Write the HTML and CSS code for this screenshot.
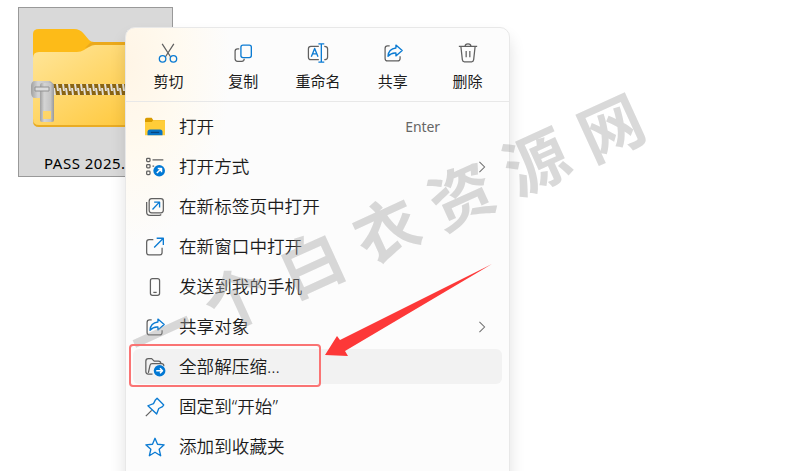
FILE: index.html
```
<!DOCTYPE html>
<html lang="zh-CN">
<head>
    <meta charset="UTF-8">
    <meta name="viewport" content="width=device-width, initial-scale=1.0">
    <title>全部解压缩</title>
    <link rel="stylesheet" href="styles.css">
</head>
<body>
    <div class="desktop">
        <div class="file">
            <svg class="zip-folder" width="136" height="112" viewBox="0 0 136 112">
                <defs>
                    <linearGradient id="front" x1="0" y1="0" x2="1" y2="1">
                        <stop offset="0" stop-color="#ffe69b"/>
                        <stop offset="0.8" stop-color="#ffcb45"/>
                        <stop offset="1" stop-color="#ffc937"/>
                    </linearGradient>
                    <linearGradient id="metal" x1="0" y1="0" x2="1" y2="0">
                        <stop offset="0" stop-color="#a0a0a0"/>
                        <stop offset="0.3" stop-color="#d4d4d4"/>
                        <stop offset="0.75" stop-color="#c4c4c4"/>
                        <stop offset="1" stop-color="#989898"/>
                    </linearGradient>
                    <pattern id="teeth" width="6" height="11" patternUnits="userSpaceOnUse" x="23" y="64">
                        <rect width="6" height="11" fill="#8a6412"/>
                        <path d="M0 4h2l1 7H1zM3 0h2l1 7H4z" fill="#e4e0d6"/>
                    </pattern>
                </defs>
                <path d="M3 45V14q0-5 6-5h35q6 0 10 5l5 6q2 2 5 2h66v40H3z" fill="#fdbb18"/>
                <path d="M55 28l5-5q2-1 4-1h66v5H60z" fill="#eba91c"/>
                <path d="M3 38q0-6 6-6h38q4 0 7-2l5-3q3-2 6-2h67v81H9q-6 0-6-6z" fill="url(#front)"/>
                <path d="M3 99q0 6 6 6h123v2H9q-6 0-6-6z" fill="#e9ac24"/>
                <rect x="22" y="64" width="110" height="11" fill="url(#teeth)"/>
                <path d="M4 61h16q4 2 4 7v5q-2 5-6 5H4q-3-1-3-6v-6q0-4 3-5z" fill="url(#metal)"/>
                <path fill-rule="evenodd" d="M12 63h9q3 0 3 3v34q0 2-2 2H12q-2 0-2-2V66q0-3 2-3zM13 91v8h8v-8z" fill="url(#metal)"/>
                <path d="M5 67h14v4H5z" fill="#dcdcdc" stroke="#929292" stroke-width="1"/>
            </svg>
            <div class="file-name">PASS 2025.</div>
        </div>

        <div class="menu">
            <div class="actions">
                <div class="action">
                    <svg class="icon" viewBox="0 0 24 24"><path d="M5 1l10 15.500M19 1L9 16.500"/><g class="blue"><circle cx="5.500" cy="19" r="3.900"/><circle cx="18.500" cy="19" r="3.900"/></g></svg>
                    <span>剪切</span>
                </div>
                <div class="action">
                    <svg class="icon" viewBox="0 0 24 24"><path d="M7.500 7H5.500q-3 0-3 3v9q0 3 3 3h5q3 0 3-3"/><rect class="blue" x="9.500" y="2.500" width="12.500" height="15" rx="2.500"/></svg>
                    <span>复制</span>
                </div>
                <div class="action">
                    <svg class="icon" viewBox="0 0 24 24"><path d="M13 20H3.500q-3 0-3-3V7q0-3 3-3H13M19.500 4q4 0 4 3v10q0 3-4 3"/><path class="blue" d="M4 16.500l4-10 4 10M5.400 13h5.200M12.500 1h7M16 1v22M12.500 23h7"/></svg>
                    <span>重命名</span>
                </div>
                <div class="action">
                    <svg class="icon" viewBox="0 0 24 24"><use href="#share"/></svg>
                    <span>共享</span>
                </div>
                <div class="action">
                    <svg class="icon" viewBox="0 0 24 24"><path d="M1 4h22M8.500 4q0-3 3.500-3t3.500 3M3.500 4.500l1.700 15.500q.3 2.500 2.500 2.500h8.600q2.200 0 2.500-2.500l1.700-15.500M9.800 9.500v7.500M14.200 9.500v7.500"/></svg>
                    <span>删除</span>
                </div>
            </div>

            <div class="items">
                <div class="item">
                    <svg class="icon" viewBox="0 0 24 24"><g stroke="none"><path d="M0 3q0-2 2-2h6l2 3h14v7H0z" fill="#d99b00"/><path d="M0 6h8l2-2h14v18H0z" fill="#ffcd39"/><path d="M3 22v-4q0-3 3-3h12q3 0 3 3v4z" fill="#0873c4"/></g><path d="M7 18.500h10" stroke="#07457e"/></svg>
                    <span class="label">打开</span>
                    <span class="shortcut">Enter</span>
                </div>
                <div class="item">
                    <svg class="icon" viewBox="0 0 24 24"><rect x="2" y="1.500" width="4" height="4" rx="1"/><rect x="2" y="9" width="4" height="4" rx="1"/><rect x="2" y="17" width="4" height="4" rx="1"/><path d="M9 3.500h13M9 11h2"/><circle class="disc" cx="17" cy="16.500" r="7"/><path class="white" d="M14.200 19.300l5.300-5.300M15.300 13.700h4.500v4.500"/></svg>
                    <span class="label">打开方式</span>
                    <svg class="chevron" viewBox="0 0 8 14"><path d="M1 1l6 6-6 6"/></svg>
                </div>
                <div class="item">
                    <svg class="icon" viewBox="0 0 24 24"><rect x="5" y="2" width="17" height="17" rx="3"/><path d="M2 6v12q0 4 4 4h11q1.500 0 2.500-1"/><path class="blue" d="M9 15l8-8.500M11 6.200h6.500v6.500"/></svg>
                    <span class="label">在新标签页中打开</span>
                </div>
                <div class="item">
                    <svg class="icon" viewBox="0 0 24 24"><path d="M10 3H5Q2 3 2 6v12.500q0 3 3 3h12.500q3 0 3-3V13"/><path class="blue" d="M11 12.500L22 1.500M14 1.500h8v8"/></svg>
                    <span class="label">在新窗口中打开</span>
                </div>
                <div class="item">
                    <svg class="icon" viewBox="0 0 24 24"><rect x="6.500" y="2" width="11" height="20" rx="2.500"/><path d="M10 18.500h4"/></svg>
                    <span class="label">发送到我的手机</span>
                </div>
                <div class="item">
                    <svg class="icon" viewBox="0 0 24 24"><g id="share"><path d="M8 3.500H5.500q-3 0-3 3v12q0 3 3 3h12q3 0 3-3V16"/><path class="blue" d="M15.500 2.500l7.500 6.500-7.500 6.500V12Q10 11.500 6 16q.5-9 9.500-10z"/></g></svg>
                    <span class="label">共享对象</span>
                    <svg class="chevron" viewBox="0 0 8 14"><path d="M1 1l6 6-6 6"/></svg>
                </div>
                <div class="item active">
                    <svg class="icon" viewBox="0 0 24 24"><path d="M9 20.500H4q-3 0-3-3V5q0-3 3-3h4l3 3h5q3 0 3 3M4 19l2-9q.5-2 2.500-2H20q3 0 2.500 3"/><circle class="disc" cx="17.500" cy="16.500" r="7"/><path class="white" d="M13.500 16.500h7.500M18 13.500l3 3-3 3"/></svg>
                    <span class="label">全部解压缩...</span>
                </div>
                <div class="item">
                    <svg class="icon" viewBox="0 0 24 24"><path d="M1 23l7-7"/><path class="blue" d="M14.500 1.500l8 8-1.500 2-4.500 2.300-2.500 6.700L3.500 10.500l6.700-2.500 2.300-4.500z"/></svg>
                    <span class="label">固定到“开始”</span>
                </div>
                <div class="item">
                    <svg class="icon" viewBox="0 0 24 24"><path class="blue" d="M12 1.500l3 7.200 8 .7-6 5.300 1.800 7.800L12 18.300l-6.800 4.200L7 14.700 1 9.400l8-.7z"/></svg>
                    <span class="label">添加到收藏夹</span>
                </div>
            </div>
        </div>

        <div class="watermark">
            <span>一</span><span>个</span><span>白</span><span>衣</span><span>资</span><span>源</span><span>网</span>
        </div>

        <div class="highlight-box"></div>
        <svg class="arrow" width="168" height="94" viewBox="0 0 168 94">
            <path d="M0 91L12 72l3 4L167 0 20 87l3 5z" fill="#fd3838"/>
        </svg>
    </div>
</body>
</html>
```

FILE: styles.css
```
* {
    box-sizing: border-box;
}
body {
    margin: 0;
    background: #fff;
    color: #1b1b1b;
    font-family: "Noto Sans", "Noto Sans CJK SC", sans-serif;
    overflow: hidden;
}
.desktop {
    position: relative;
    width: 788px;
    height: 471px;
    overflow: hidden;
}
.file {
    width: 155px;
    height: 170px;
    margin-left: 18px;
    border: 1px solid #999;
    background: #d9d9d9;
    position: absolute;
    top: 7px;
}
.zip-folder {
    display: block;
    margin: 12px 0 0 11px;
}
.file-name {
    margin: 20px 0 0 25px;
    color: #000;
    font-size: 15px;
    letter-spacing: 0.5px;
    line-height: 22px;
    white-space: nowrap;
}
/* context menu, runs past the bottom edge */
.menu {
    position: absolute;
    left: 125px;
    top: 27px;
    width: 385px;
    height: 480px;
    border: 1px solid #e8e8e8;
    border-radius: 10px;
    background: radial-gradient(ellipse 105px 185px at 0 35px, #fff5e6, #fffaf0 50%, #fcfcfc 100%) #fcfcfc;
    box-shadow: 0 10px 16px rgba(0, 0, 0, 0.12);
}
.actions {
    display: flex;
    height: 74px;
    padding: 14px 4px 0 5px;
    border-bottom: 1px solid #e8e8e8;
}
.action {
    display: flex;
    flex: 1;
    flex-direction: column;
    align-items: center;
    gap: 5px;
    font-family: "Noto Sans CJK SC", sans-serif;
    font-size: 15px;
    line-height: 24px;
}
.icon {
    width: 20px;
    height: 22px;
    flex: none;
    overflow: visible;
    fill: none;
    stroke: #606060;
    stroke-width: 1.5;
    stroke-linejoin: round;
}
.blue {
    stroke: #0b7bd3;
    stroke-width: 1.6;
}
.disc {
    fill: #0078d4;
    stroke: none;
}
.white {
    stroke: #fff;
    stroke-width: 1.8;
}
.items {
    display: flex;
    flex-direction: column;
    gap: 5px;
    padding: 7px;
}
.item {
    display: flex;
    align-items: center;
    height: 35px;
    padding: 0 16px 0 12px;
    border-radius: 6px;
}
.item.active {
    background: #f2f2f2;
}
.label {
    margin: 0 0 2px 14px;
    flex: 1;
    font-size: 17.6px;
    font-weight: 350;
    line-height: 26px;
    white-space: nowrap;
}
.shortcut {
    margin-right: 46px;
    color: #666;
    font-size: 14px;
    letter-spacing: -0.1px;
}
.chevron {
    width: 8px;
    height: 12px;
    fill: none;
    stroke: #707070;
    stroke-width: 1.2;
}
.watermark {
    position: absolute;
    left: 119px;
    top: 281px;
    display: flex;
    transform: rotate(-24.5deg);
    transform-origin: 41px 48px;
    color: rgba(160, 160, 160, 0.4);
    font-family: "Noto Sans CJK SC", sans-serif;
    font-size: 64px;
    font-weight: 700;
    line-height: 96px;
}
.watermark span {
    width: 82.3px;
    text-align: center;
}
.highlight-box {
    position: absolute;
    left: 129px;
    top: 344px;
    width: 192px;
    height: 43px;
    border: 2px solid #fa7474;
    border-radius: 4px;
}
.arrow {
    position: absolute;
    left: 325px;
    top: 264px;
}
```
